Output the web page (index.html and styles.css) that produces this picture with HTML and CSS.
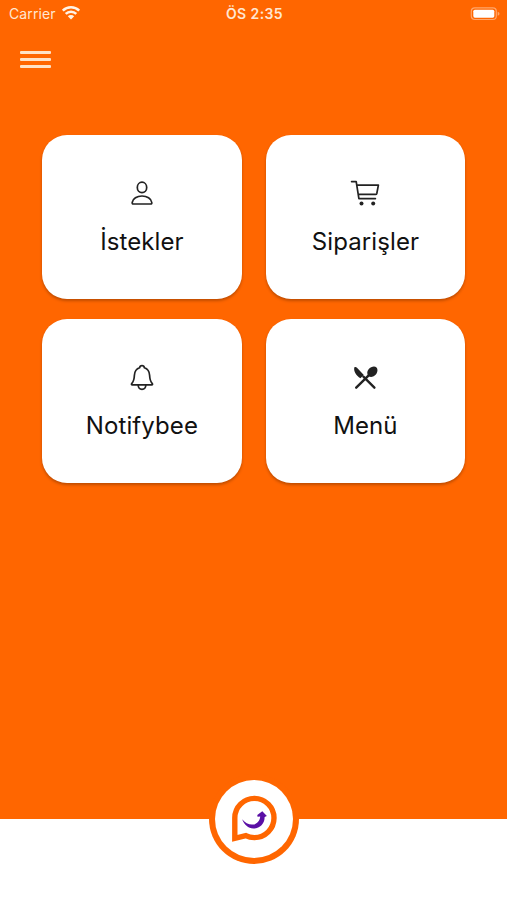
FILE: index.html
```html
<!DOCTYPE html>
<html lang="tr">
<head>
  <meta charset="UTF-8">
  <meta name="viewport" content="width=device-width, initial-scale=1.0">
  <title>Notifybee</title>
  <link rel="stylesheet" href="styles.css">
</head>
<body>
  <div class="screen">
    <header class="status-bar">
      <div class="carrier">
        <span>Carrier</span>
        <svg class="wifi" width="20" height="16" viewBox="0 0 20 16">
          <path d="M1.8 5.6a11.7 11.7 0 0 1 16.4 0M4.7 8.9a7.5 7.5 0 0 1 10.6 0" fill="none" stroke="#fff3e6" stroke-width="2.5"/>
          <path d="M6.8 11.2a4.6 4.6 0 0 1 6.4 0L10 14.5z" fill="#fff3e6"/>
        </svg>
      </div>
      <div class="clock">ÖS 2:35</div>
      <svg class="battery" width="30" height="14" viewBox="0 0 30 14">
        <rect x="1.3" y="0.9" width="25" height="11.6" rx="3.5" fill="none" stroke="#ffa66b" stroke-width="1.2"/>
        <rect x="3.3" y="2.7" width="21" height="8" rx="1.6" fill="#fff"/>
        <path d="M27.7 4.7v4q1.8-.7 1.8-2t-1.8-2z" fill="#ffa66b"/>
      </svg>
    </header>

    <button class="menu-button" aria-label="Menü">
      <span></span>
      <span></span>
      <span></span>
    </button>

    <main class="cards">
      <div class="card">
        <svg class="icon" width="32" height="32" viewBox="0 0 32 32">
          <ellipse cx="16" cy="10.4" rx="4.7" ry="5.2"/>
          <path d="M7.4 27h17.2q1.4 0 1.2-1.5c-.6-4-4.8-6.5-9.8-6.5s-9.2 2.5-9.8 6.5q-.2 1.500 1.200 1.500z"/>
        </svg>
        <p>İstekler</p>
      </div>
      <div class="card">
        <svg class="icon" width="32" height="32" viewBox="0 0 32 32">
          <path d="M2.600 4.600h4.600l2.700 17h16.500M7.900 8.200h21.500l-1.600 8.300q-.2.900-1.200.9H9.300"/>
          <circle class="solid" cx="12.500" cy="26.400" r="2"/>
          <circle class="solid" cx="24.200" cy="26.400" r="2"/>
        </svg>
        <p>Siparişler</p>
      </div>
      <div class="card">
        <svg class="icon" width="32" height="32" viewBox="0 0 32 32">
          <path d="M16 4.700c-1.300 0-2.200.9-2.300 2-3.500 1-5.100 3.800-5.300 7.600-.2 4.200-.6 6-2.500 8-.8.900-.5 1.600.5 1.600h19.200c1 0 1.300-.7.500-1.600-1.900-2-2.300-3.800-2.500-8-.2-3.800-1.800-6.600-5.300-7.600-.1-1.100-1-2-2.300-2z"/>
          <path d="M12.200 24.300c.1 2.500 1.700 4 3.800 4s3.700-1.500 3.800-4"/>
        </svg>
        <p>Notifybee</p>
      </div>
      <div class="card">
        <svg class="icon" width="32" height="32" viewBox="0 0 32 32">
          <g transform="translate(.6 .9)">
            <path class="solid" d="M4.800 5.400c.8-.7 1.800-.5 2.600.4l6.800 7.200-3.400 3.400C6.800 13.700 3.600 9.500 4.800 5.400z"/>
            <path class="solid" d="M19 7.300c2.400-2.800 6.200-3.600 7.900-1.700s1.200 5.500-1.500 7.800c-2.200 1.900-4.900 2.100-6.500.6s-1.800-4.600.1-6.700z"/>
            <path class="handle" d="M19.600 13L6.600 25.800M13.800 14.800l11 11"/>
          </g>
        </svg>
        <p>Menü</p>
      </div>
    </main>

    <footer class="bottom-bar">
      <div class="logo">
        <svg width="78" height="78" viewBox="6 6 78 78">
          <path d="M25.800 64.300V44a19.600 19.600 0 1 1 19.600 19.600q-4.800 0-8.600-2z" fill="none" stroke="#ff6600" stroke-width="5.400"/>
          <path d="M33.200 45.200c2.800 3.500 6.500 5.600 10.300 5.400 4.300-.2 7.400-3.400 7.700-8l-2.700.1-.2-1.700 5-3.700 4.600 4.700-2.300.9c.3 6.500-4.800 11.600-11.200 11.500-5.200-.1-9.300-3.700-11.200-9.200z" fill="#5a0fa5"/>
        </svg>
      </div>
    </footer>
  </div>
</body>
</html>
```
FILE: styles.css
```css
* {
  box-sizing: border-box;
}

body {
  margin: 0;
  font-family: Inter, "Noto Sans", sans-serif;
  background: #ff6600;
}

.screen {
  display: flex;
  flex-direction: column;
  height: 900px;
}

.status-bar {
  display: grid;
  grid-template-columns: 1fr auto 1fr;
  align-items: center;
  height: 27px;
  padding: 0 7px 0 9px;
  color: #ffe6d2;
  font-size: 14px;
}

.carrier {
  display: flex;
  align-items: center;
  gap: 5px;
  letter-spacing: 0.1px;
}

.wifi {
  margin-top: -2px;
}

.clock {
  font-size: 14px;
  font-weight: 600;
  letter-spacing: 0.4px;
}

.battery {
  justify-self: end;
}

.menu-button {
  display: flex;
  flex-direction: column;
  gap: 4px;
  width: 31px;
  margin: 24px 0 0 20px;
  padding: 0;
  background: none;
  border: none;
  cursor: pointer;
}

.menu-button span {
  width: 100%;
  height: 3px;
  border-radius: 1px;
  background: #ffe2c6;
}

.cards {
  display: grid;
  grid-template-columns: 1fr 1fr;
  grid-auto-rows: 164px;
  gap: 20px 24px;
  margin: 67px 41.8px 0 42.2px;
}

.card {
  display: flex;
  flex-direction: column;
  align-items: center;
  padding-top: 42px;
  background: #fff;
  border-radius: 25px;
  box-shadow: 0 2px 3px rgba(0, 0, 0, 0.25);
}

.card p {
  margin: 18px 0 0;
  color: #111;
  font-size: 24px;
  line-height: 30px;
  letter-spacing: 0.1px;
}

.icon {
  fill: none;
  stroke: #222;
  stroke-width: 1.7;
  stroke-linejoin: round;
  stroke-linecap: round;
}

.icon .solid {
  fill: #222;
  stroke: none;
}

.icon .handle {
  stroke-width: 2.4;
}

.bottom-bar {
  display: flex;
  justify-content: center;
  height: 81px;
  margin-top: auto;
  background: #fff;
}

.logo {
  width: 90px;
  height: 90px;
  margin-top: -45px;
  padding: 6px;
  border-radius: 50%;
  background: #ff6600;
}

.logo svg {
  display: block;
  border-radius: 50%;
  background: #fff;
}
```
